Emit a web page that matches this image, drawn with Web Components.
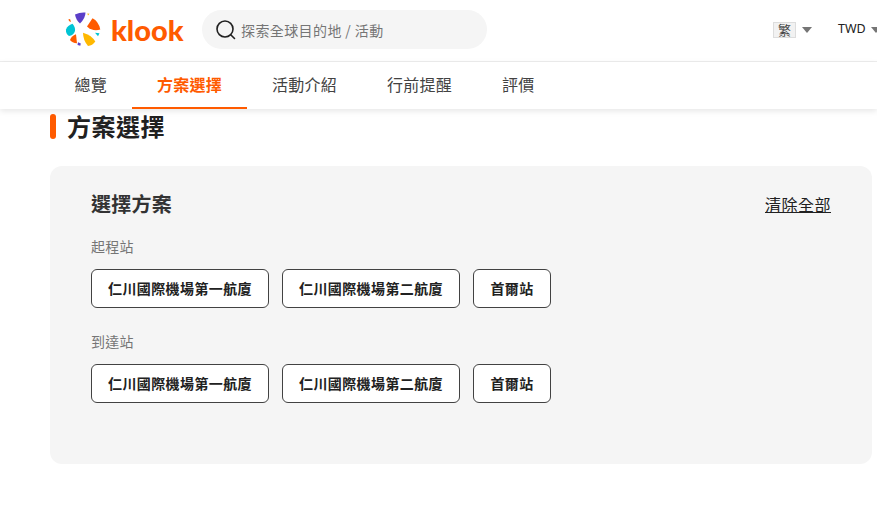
<!DOCTYPE html>
<html lang="zh-Hant">
<head>
<meta charset="utf-8">
<title>方案選擇</title>
<style>
  html, body { margin: 0; height: 100%; overflow: hidden; background: #fff; }
  body { font-family: "Noto Sans CJK TC", "Noto Sans", sans-serif; color: #212121; }
</style>
</head>
<body>
<klk-header></klk-header>
<klk-tabs></klk-tabs>
<klk-package-section></klk-package-section>

<script>
class KlkHeader extends HTMLElement {
  shadowRoot = this.attachShadow({ mode: "open" });

  constructor() {
    super();
    this.shadowRoot.innerHTML = `
      <style>
        :host { display: flex; align-items: center; height: 59px; padding-bottom: 2px; border-bottom: 1px solid #eee; padding-left: 65px; overflow: hidden; white-space: nowrap; }
        .logo { display: flex; align-items: center; width: 137px; flex: none; }
        .logo svg { display: block; flex: none; }
        .word { font: 900 29px/1 Lato, sans-serif; color: #ff5b00; margin-left: 8px; }
        .search { flex: none; display: flex; align-items: center; width: 285px; height: 39px; box-sizing: border-box; padding-left: 14px; border-radius: 20px; background: #f5f5f5; color: #757575; font-size: 14px; letter-spacing: .4px; }
        .search svg { flex: none; margin-right: 5px; }
        .lang { flex: none; margin-left: 286px; display: flex; align-items: center; }
        .flag { width: 23px; height: 16px; box-sizing: border-box; border: 1px solid #ddd; background: #f2f2f2; font-size: 13px; line-height: 14px; text-align: center; color: #444; }
        .arrow { width: 0; height: 0; border: 5px solid transparent; border-top: 6px solid #757575; border-bottom: 0; margin-left: 6px; }
        .cur { flex: none; margin-left: 26px; display: flex; align-items: center; font: 400 12.500px/1 "Noto Sans", sans-serif; color: #212121; }
        .cur .arrow { margin-left: 5px; }
      </style>
      <div class="logo">
        <svg width="38" height="37" viewBox="65 11 38 37">
          <path d="M75 14.500 Q80 12 85.500 12.500 Q85.500 18 80 23.500 Q76 20 75 14.500Z" fill="#5b3fc8"/>
          <path d="M87.300 13.500 L89.500 13.800 L88 15.500 Z" fill="#ffb800"/>
          <path d="M68.300 19.500 L70 19 L71 22 Q69 21.500 68.300 19.500Z" fill="#ff5b00"/>
          <path d="M87 26.500 L92.500 18.200 Q98.500 21 100.300 29.500 Q93 32 87 26.500Z" fill="#ff5b00"/>
          <path d="M72.500 23.800 Q75.500 27 75 31 Q73.500 35.500 69 36 Q65.500 33.500 66 29.500 Q67.500 25.500 72.500 23.800Z" fill="#00c4d4"/>
          <path d="M95 32.800 L99.500 33.300 L98 36.300 Z" fill="#00c4d4"/>
          <path d="M76 34.300 L77 43.300 Q72 43 70 40 Q71.500 36 76 34.300Z" fill="#ff5b00"/>
          <path d="M78 42.200 L80.800 43.500 L80.300 45.700 L77.500 45 Z" fill="#5b3fc8"/>
          <path d="M83 32.700 Q91.500 35 95.300 41.500 Q92.500 45.500 88 46 Q83 40 83 32.700Z" fill="#ffb800"/>
        </svg>
        <span class="word">klook</span>
      </div>
      <label class="search">
        <svg width="20" height="20" viewBox="0 0 20 20" fill="none" stroke="#212121" stroke-width="1.600" stroke-linecap="round"><circle cx="9" cy="9" r="8"/><path d="M15 15l3.500 3.500"/></svg>
        <span>探索全球目的地 / 活動</span>
      </label>
      <div class="lang"><div class="flag">繁</div><span class="arrow"></span></div>
      <div class="cur"><span>TWD</span><span class="arrow"></span></div>
    `;
  }
}

class KlkTabs extends HTMLElement {
  shadowRoot = this.attachShadow({ mode: "open" });

  constructor() {
    super();
    const tabs = ["總覽", "方案選擇", "活動介紹", "行前提醒", "評價"];
    this.shadowRoot.innerHTML = `
      <style>
        :host { display: flex; height: 47px; padding-left: 49.500px; background: #fff; box-shadow: 0 2px 6px rgba(0,0,0,.1); position: relative; }
        .tab { box-sizing: border-box; height: 47px; padding: 10px 25px 0; font-size: 16px; line-height: 24px; letter-spacing: .25px; color: #424242; }
        .tab.active { color: #ff5b00; font-weight: 700; border-bottom: 2px solid #ff5b00; }
      </style>
      ${tabs.map((t, i) => `<div class="tab${i === 1 ? " active" : ""}">${t}</div>`).join("")}
    `;
  }
}

class KlkOption extends HTMLElement {
  shadowRoot = this.attachShadow({ mode: "open" });

  constructor() {
    super();
    this.shadowRoot.innerHTML = `
      <style>
        :host { display: block; box-sizing: border-box; min-width: 78px; height: 39px; padding: 0 16px; background: #fff; border: 1px solid #424242; border-radius: 6px; font-size: 14px; font-weight: 700; letter-spacing: .4px; line-height: 36px; text-align: center; color: #212121; white-space: nowrap; }
      </style>
      <slot></slot>
    `;
  }
}

class KlkOptionGroup extends HTMLElement {
  shadowRoot = this.attachShadow({ mode: "open" });

  constructor() {
    super();
    this.shadowRoot.innerHTML = `
      <style>
        :host { display: block; margin-bottom: 23px; }
        .label { font-size: 14px; line-height: 20px; letter-spacing: .3px; color: #757575; margin-bottom: 13px; }
        .row { display: flex; gap: 13px; }
      </style>
      <div class="label">${this.getAttribute("label")}</div>
      <div class="row"><slot></slot></div>
    `;
  }
}

class KlkPackageSection extends HTMLElement {
  shadowRoot = this.attachShadow({ mode: "open" });

  constructor() {
    super();
    this.shadowRoot.innerHTML = `
      <style>
        :host { display: block; padding: 4px 5px 0 50px; }
        h2 { display: flex; align-items: center; margin: 0 0 28px; height: 25px; font-size: 24px; line-height: 25px; letter-spacing: .5px; font-weight: 700; color: #212121; }
        h2::before { content: ""; width: 6px; height: 25px; margin-top: 2px; border-radius: 3px; background: #ff5b00; margin-right: 11px; }
        .card { box-sizing: border-box; height: 298px; padding: 22px 41px; background: #f5f5f5; border-radius: 12px; }
        .head { display: flex; justify-content: space-between; align-items: center; height: 32px; margin-bottom: 16px; }
        h3 { margin: 0; font-size: 20px; font-weight: 700; line-height: 32px; letter-spacing: .25px; color: #333; }
        a { font-size: 16px; letter-spacing: .5px; color: #212121; text-decoration: underline; }
      </style>
      <h2>方案選擇</h2>
      <div class="card">
        <div class="head"><h3>選擇方案</h3><a>清除全部</a></div>
        <klk-option-group label="起程站">
          <klk-option>仁川國際機場第一航廈</klk-option>
          <klk-option>仁川國際機場第二航廈</klk-option>
          <klk-option>首爾站</klk-option>
        </klk-option-group>
        <klk-option-group label="到達站">
          <klk-option>仁川國際機場第一航廈</klk-option>
          <klk-option>仁川國際機場第二航廈</klk-option>
          <klk-option>首爾站</klk-option>
        </klk-option-group>
      </div>
    `;
  }
}

customElements.define("klk-header", KlkHeader);
customElements.define("klk-tabs", KlkTabs);
customElements.define("klk-option", KlkOption);
customElements.define("klk-option-group", KlkOptionGroup);
customElements.define("klk-package-section", KlkPackageSection);
</script>
</body>
</html>
